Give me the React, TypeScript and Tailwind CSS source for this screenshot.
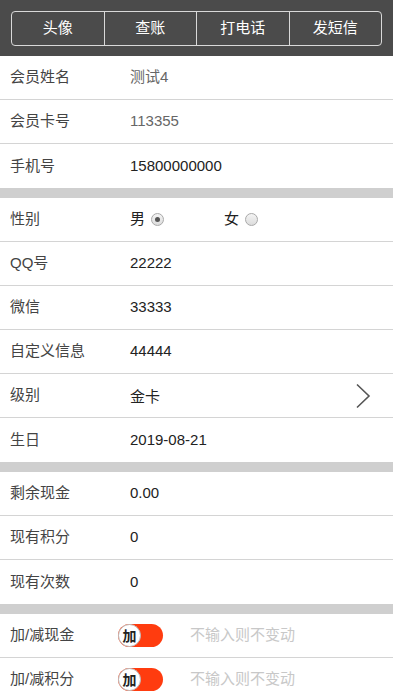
import React from "react";

type Row = { label: string; value?: React.ReactNode; muted?: boolean; chevron?: boolean };

const font = { fontFamily: '"Liberation Sans", "Noto Sans CJK SC", sans-serif' };

function Radio({ checked }: { checked?: boolean }) {
  return (
    <span className="ml-1.5 inline-flex h-[13px] w-[13px] items-center justify-center rounded-full border border-[#a9a9a9] bg-gradient-to-b from-[#f4f4f4] to-[#dcdcdc]">
      {checked && <span className="h-[5px] w-[5px] rounded-full bg-[#555]" />}
    </span>
  );
}

function Toggle() {
  return (
    <div className="flex h-[23px] w-[45px] items-center rounded-full bg-[#ff3c0f]">
      <div className="flex h-[23px] w-[23px] items-center justify-center rounded-full border border-[#bbb] bg-white text-[14px] font-bold leading-none text-[#222]">
        加
      </div>
    </div>
  );
}

function Chevron() {
  return (
    <svg width="16" height="26" viewBox="0 0 16 26" className="absolute right-[22px] top-1/2 -translate-y-1/2">
      <path d="M2 1.5 L14 13 L2 24.5" fill="none" stroke="#555" strokeWidth="1.6" />
    </svg>
  );
}

function ListRow({ row, last }: { row: Row; last?: boolean }) {
  return (
    <div className={`relative flex h-[44px] items-center bg-white ${last ? "" : "border-b border-[#d4d4d4]"}`}>
      <div className="w-[130px] shrink-0 pl-[10px] text-[15px] text-[#444]">{row.label}</div>
      <div className={`text-[15px] ${row.muted ? "text-[#666]" : "text-[#222]"}`}>{row.value}</div>
      {row.chevron && <Chevron />}
    </div>
  );
}

function Section({ rows }: { rows: Row[] }) {
  return (
    <div>
      {rows.map((r, i) => (
        <ListRow key={i} row={r} last={i === rows.length - 1} />
      ))}
    </div>
  );
}

const Gap = () => <div className="h-[10px] bg-[#cfcfcf]" />;

export default function App() {
  const buttons = ["头像", "查账", "打电话", "发短信"];
  return (
    <div className="min-h-[700px] w-[393px] bg-white" style={font}>
      <div className="flex h-[56px] items-center bg-[#4b4b4b] px-[11px]">
        <div className="flex h-[35px] w-full overflow-hidden rounded-[4px] border-[1.5px] border-[#d9d9d9]">
          {buttons.map((b, i) => (
            <div
              key={b}
              className={`flex flex-1 items-center justify-center text-[15px] text-white ${i > 0 ? "border-l-[1.5px] border-[#d9d9d9]" : ""}`}
            >
              {b}
            </div>
          ))}
        </div>
      </div>

      <Section
        rows={[
          { label: "会员姓名", value: "测试4", muted: true },
          { label: "会员卡号", value: "113355", muted: true },
          { label: "手机号", value: "15800000000" },
        ]}
      />
      <Gap />
      <Section
        rows={[
          {
            label: "性别",
            value: (
              <div className="flex items-center">
                <span className="flex items-center">
                  男<Radio checked />
                </span>
                <span className="ml-[60px] flex items-center">
                  女<Radio />
                </span>
              </div>
            ),
          },
          { label: "QQ号", value: "22222" },
          { label: "微信", value: "33333" },
          { label: "自定义信息", value: "44444" },
          { label: "级别", value: <span className="relative top-[2px]">金卡</span>, chevron: true },
          { label: "生日", value: "2019-08-21" },
        ]}
      />
      <Gap />
      <Section
        rows={[
          { label: "剩余现金", value: "0.00" },
          { label: "现有积分", value: "0" },
          { label: "现有次数", value: "0" },
        ]}
      />
      <Gap />
      {["加/减现金", "加/减积分"].map((l) => (
        <div key={l} className="flex h-[44px] items-center border-b border-[#d4d4d4] bg-white">
          <div className="w-[118px] shrink-0 pl-[10px] text-[15px] text-[#444]">{l}</div>
          <Toggle />
          <div className="ml-[27px] text-[15px] text-[#c8c8c8]">不输入则不变动</div>
        </div>
      ))}
    </div>
  );
}
